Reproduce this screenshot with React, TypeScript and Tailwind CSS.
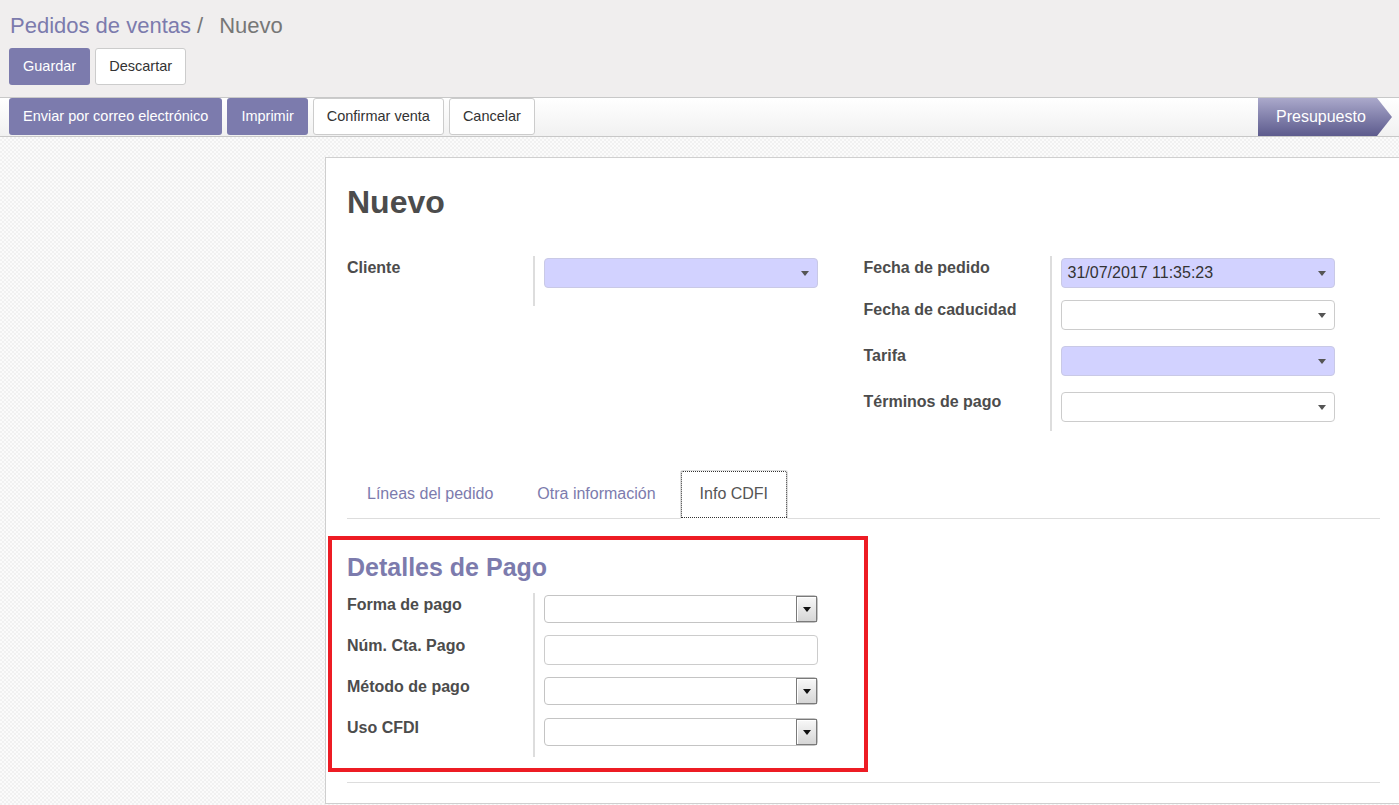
import clsx from "clsx";

const Caret = () => (
  <svg width="8" height="5" viewBox="0 0 8 5">
    <path d="M0 0h8L4 5z" fill="#555" />
  </svg>
);

const M2OInput = ({ value, required }: { value?: string; required?: boolean }) => (
  <div
    className={clsx(
      "mt-[2px] flex h-[30px] w-[274px] items-center justify-between rounded-[4px] border pl-[6px] pr-[8px] text-[16px] text-[#333]",
      required ? "border-[#c9c9e6] bg-[#d2d2ff]" : "border-[#ccc] bg-white"
    )}
  >
    <span>{value}</span>
    <Caret />
  </div>
);

const NativeSelect = () => (
  <div className="mt-[2px] flex h-[28px] w-[274px] items-stretch justify-end rounded-[4px] border border-[#c4c4c4] bg-white p-0">
    <div className="flex w-[21px] items-center justify-center border border-[#7a7a7a] bg-gradient-to-b from-[#f8f8f8] to-[#d6d6d6] shadow-[inset_1px_1px_0_#fff]">
      <svg width="8" height="5" viewBox="0 0 8 5">
        <path d="M0 0h8L4 5z" fill="#111" />
      </svg>
    </div>
  </div>
);

const TextInput = () => (
  <div className="mt-[1px] h-[30px] w-[274px] rounded-[4px] border border-[#ccc] bg-white" />
);

const FieldRow = ({ label, h, children }: { label: string; h: string; children: React.ReactNode }) => (
  <div className={clsx("flex", h)}>
    <div className="w-[188px] shrink-0 border-r-2 border-[#ddd] pt-px text-[16px] font-bold leading-[22px] text-[#4c4c4c]">
      {label}
    </div>
    <div className="pl-[9px]">{children}</div>
  </div>
);

const PurpleBtn = ({ children }: { children: React.ReactNode }) => (
  <button className="h-[37px] rounded-[3px] bg-[#7c7bad] px-[14px] text-[14.5px] text-white">{children}</button>
);

const WhiteBtn = ({ children }: { children: React.ReactNode }) => (
  <button className="h-[37px] rounded-[3px] border border-[#ccc] bg-white px-[13px] text-[14.5px] text-[#333]">
    {children}
  </button>
);

export default function App() {
  return (
    <div className="font-['Liberation_Sans',Arial,sans-serif] text-[#4c4c4c]">
      {/* control panel */}
      <div className="border-b border-[#c8c8c8] bg-[#f0eeee] pl-[9px] pt-[13px] pb-[12px]">
        <div className="flex pl-[1px] text-[22px] leading-[26px]">
          <span className="text-[#7c7bad]">Pedidos de ventas</span>
          <span className="ml-[6px] mr-[16px] text-[#777]">/</span>
          <span className="text-[#777]">Nuevo</span>
        </div>
        <div className="mt-[9px] flex gap-[5px]">
          <PurpleBtn>Guardar</PurpleBtn>
          <WhiteBtn>Descartar</WhiteBtn>
        </div>
      </div>

      {/* status bar */}
      <div className="flex h-[39px] items-start justify-between border-b border-[#c8c8c8] bg-gradient-to-b from-white to-[#f1f1f1] pl-[9px] pr-[7px]">
        <div className="flex gap-[5px]">
          <PurpleBtn>Enviar por correo electrónico</PurpleBtn>
          <PurpleBtn>Imprimir</PurpleBtn>
          <WhiteBtn>Confirmar venta</WhiteBtn>
          <WhiteBtn>Cancelar</WhiteBtn>
        </div>
        <div className="flex h-[38px] w-[134px] items-center bg-gradient-to-b from-[#aba9cb] to-[#5d5b8d] pl-[18px] text-[16px] text-white [clip-path:polygon(0_0,calc(100%-15px)_0,100%_50%,calc(100%-15px)_100%,0_100%)]">
          Presupuesto
        </div>
      </div>

      {/* content */}
      <div className="overflow-hidden bg-[#f8f8f8] bg-[image:repeating-conic-gradient(#f1f1f1_0_25%,#fbfbfb_0_50%)] bg-[length:4px_4px] pl-[325px] pt-[20px] pb-[20px]">
        <div className="w-[1077px] shrink-0 border border-[#cfcfcf] bg-white px-[21px] pt-[25px] pb-[20px]">
          <h1 className="text-[32px] font-bold leading-[38px] text-[#4c4c4c]">Nuevo</h1>

          <div className="mt-[35px] grid grid-cols-2">
            <div>
              <FieldRow label="Cliente" h="h-[50px]">
                <M2OInput required />
              </FieldRow>
            </div>
            <div>
              <FieldRow label="Fecha de pedido" h="h-[42px]">
                <M2OInput required value="31/07/2017 11:35:23" />
              </FieldRow>
              <FieldRow label="Fecha de caducidad" h="h-[46px]">
                <M2OInput />
              </FieldRow>
              <FieldRow label="Tarifa" h="h-[46px]">
                <M2OInput required />
              </FieldRow>
              <FieldRow label="Términos de pago" h="h-[41px]">
                <M2OInput />
              </FieldRow>
            </div>
          </div>

          {/* tabs */}
          <div className="mt-[39px] flex border-b border-[#ddd] text-[16px]">
            <div className="mr-[3px] flex h-[48px] items-center px-[20px] text-[#7c7bad]">Líneas del pedido</div>
            <div className="mr-[3px] flex h-[48px] items-center px-[21px] text-[#7c7bad]">Otra información</div>
            <div className="-mb-px flex h-[49px] items-center rounded-t-[3px] border border-[#ddd] border-b-white bg-white px-[19px] pb-[1px] text-[#555] outline-1 outline-dotted outline-[#333] -outline-offset-2">
              Info CDFI
            </div>
          </div>

          {/* highlighted section */}
          <div className="mt-[17px] -ml-[19px] w-[540px] border-4 border-[#ed1c24] pl-[15px] pt-[12px] pb-[11px]">
            <h2 className="mb-[10px] text-[25px] font-bold leading-[30px] text-[#7c7bad]">Detalles de Pago</h2>
            <div className="pt-px">
              <FieldRow label="Forma de pago" h="h-[41px]">
                <NativeSelect />
              </FieldRow>
              <FieldRow label="Núm. Cta. Pago" h="h-[41px]">
                <TextInput />
              </FieldRow>
              <FieldRow label="Método de pago" h="h-[41px]">
                <NativeSelect />
              </FieldRow>
              <FieldRow label="Uso CFDI" h="h-[41px]">
                <NativeSelect />
              </FieldRow>
            </div>
          </div>

          <div className="mt-[10px] border-t border-[#ddd]" />
        </div>
      </div>
    </div>
  );
}
